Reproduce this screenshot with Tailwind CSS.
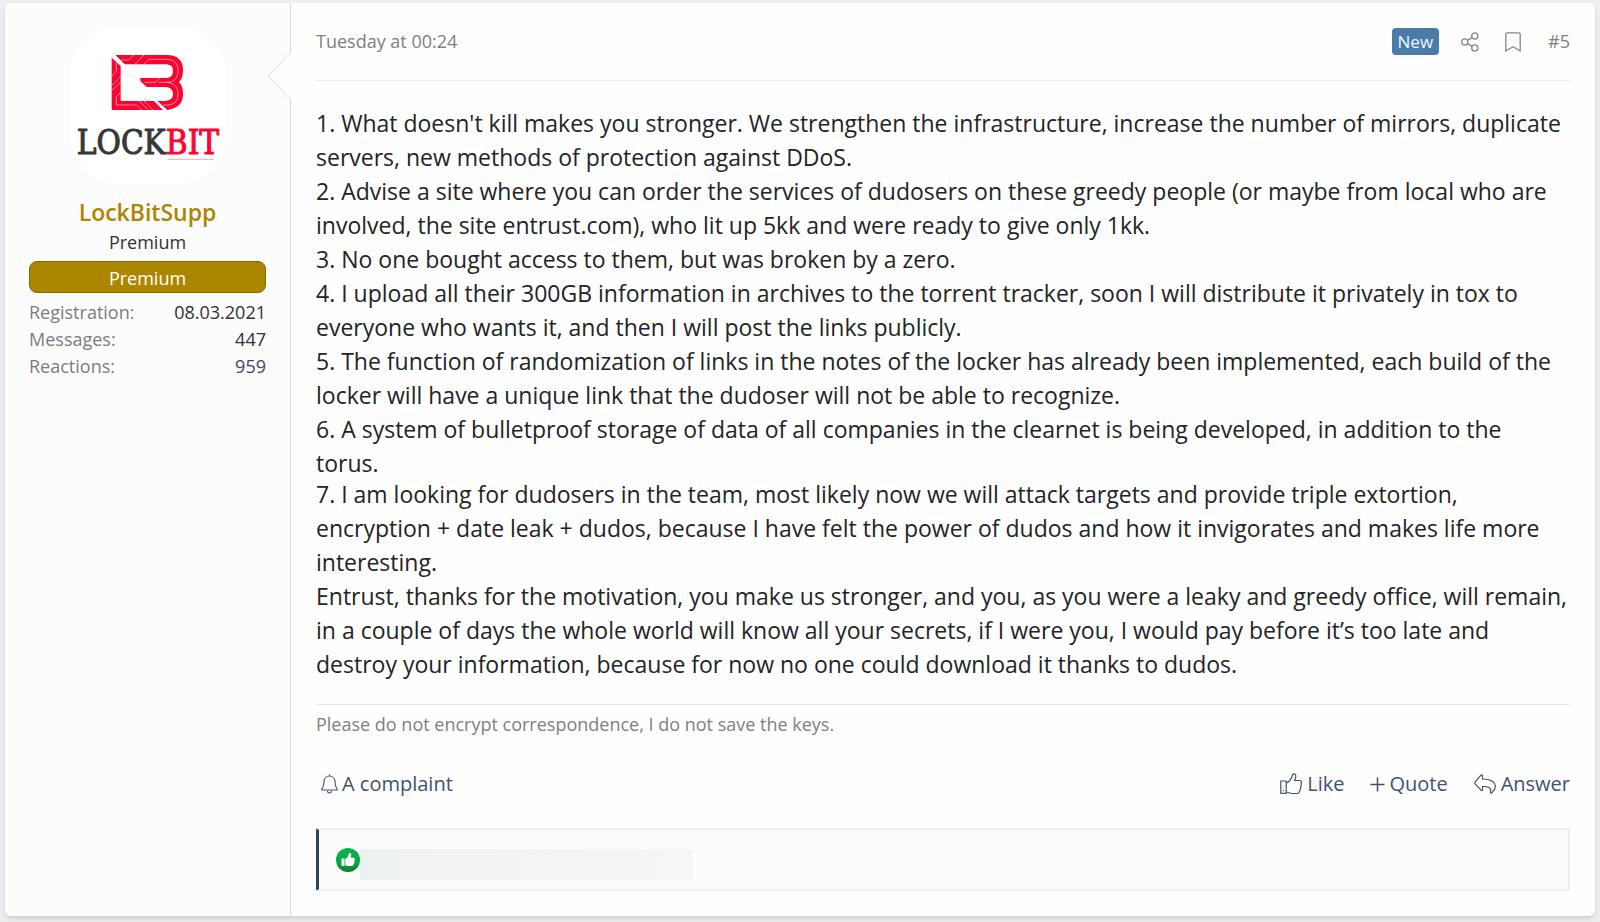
<!DOCTYPE html>
<html lang="en">
<head>
  <meta charset="UTF-8" />
  <meta name="viewport" content="width=device-width, initial-scale=1.0"/>
  <title>LockBitSupp | Post #5</title>
  <script src="https://cdn.jsdelivr.net/npm/@tailwindcss/browser@4"></script>
</head>
<body class="bg-[#edeef1] font-['Open_Sans','Noto_Sans',sans-serif] min-h-screen px-[5px] pt-[3px] pb-[6px] flex flex-col">

  <!-- Post -->
  <article class="flex grow bg-[#fefefe] rounded-md shadow-md">

    <!-- User info -->
    <aside class="relative w-[286px] shrink-0 bg-[#fcfcfc] border-r border-[#dcdde0] rounded-l-md px-6 pt-6 text-[18px] leading-[27px]">
      <div class="mx-auto w-[156px] h-[156px] rounded-[48px] bg-white">
        <svg class="w-full h-full" viewBox="0 0 156 156" role="img" aria-label="LockBit">
          <g transform="translate(-70 -27) scale(.33333)">
            <path fill="#fb0432" d="M335 173 L362 198 V303 H462 L489 330 H335 Z"/>
            <path fill="#fb0432" d="M346 165 H500 C533 165 549 182 549 208 C549 228 545 239 536 247 C545 255 549 264 549 283 C549 309 535 325 502 330 L472 303 H490 C510 303 519 296 519 282 C519 268 510 261 494 261 H440 L421 243 V234 H496 C512 234 519 227 519 213 C519 199 511 193 494 193 H374 Z"/>
            <g fill="none" stroke="#fff" stroke-width="2" stroke-opacity=".8">
              <path d="M349 187 V214 L335 229"/>
              <path d="M362 229 L335 257 M362 245 L335 272"/>
              <path d="M349 290 V315 H410 L425 330 M349 290 L362 278"/>
              <path d="M418 303 L443 328 M432 303 L459 330"/>
              <path d="M363 180 H386 L401 165 M405 193 L432 165"/>
              <path d="M432 193 L446 178 H498 C523 178 534 190 534 211 C534 235 522 247 500 247 H486 L475 247"/>
              <path d="M434 247 H466 L479 234 M500 247 C523 249 534 263 534 282 C534 302 524 312 507 315 H489"/>
            </g>
            <path stroke="#fb0432" stroke-opacity=".35" stroke-width="3" d="M502 478 H640"/>
          </g>
          <g text-anchor="middle" font-family="'DejaVu Serif Condensed','DejaVu Serif',serif" font-size="33">
            <text x="78" y="127" fill="#373737" stroke="#373737" stroke-width="1">LOCK<tspan fill="#fb0432" stroke="#fb0432">BIT</tspan></text>
          </g>
        </svg>
      </div>
      <h4 class="mt-[13px] text-center text-[23px] leading-8 font-semibold"><a href="#" class="text-[#ad8600]">LockBitSupp</a></h4>
      <p class="mt-px text-center text-[#333]">Premium</p>
      <p class="mt-[5px] h-8 leading-[32px] rounded-lg border border-[#866700] bg-[#ad8600] text-center text-white">Premium</p>
      <dl class="mt-[6px] text-[#7b7c7e]">
        <div class="flex justify-between"><dt>Registration:</dt><dd class="text-[#303236]">08.03.2021</dd></div>
        <div class="flex justify-between"><dt>Messages:</dt><dd class="text-[#303236]">447</dd></div>
        <div class="flex justify-between"><dt>Reactions:</dt><dd class="text-[#3c4a5c]">959</dd></div>
      </dl>
      <!-- Arrow that points from the message to the user -->
      <svg class="absolute top-[49px] -right-px w-6 h-12" viewBox="0 0 24 48" fill="#fefefe" aria-hidden="true">
        <path d="M24 0 L1 24 L24 48 Z"/>
        <path fill="none" stroke="#dcdde0" d="M23.5 .5 L1 24 L23.5 47.5"/>
      </svg>
    </aside>

    <!-- Message -->
    <div class="min-w-0 grow px-[25px] pb-[25px]">
      <header class="flex h-[78px] items-center justify-between border-b border-[#ececec] text-[18px] text-[#7f8082]">
        <a href="#"><time>Tuesday at 00:24</time></a>
        <ul class="flex items-center">
          <li class="mr-[22px] h-[27px] rounded-sm bg-[#4a7ca9] px-[6px] text-[17px] leading-[27px] text-[#f3f8fd]">New</li>
          <li class="mr-[26px]">
            <a href="#" aria-label="Share">
              <svg class="w-[18px] h-5" viewBox="0 0 18 20" fill="none" stroke="#858688" stroke-width="1.3">
                <circle cx="3.8" cy="10" r="3.1"/><circle cx="13.8" cy="4" r="3.1"/><circle cx="13.8" cy="16" r="3.1"/>
                <path d="M6.5 8.4 L11.1 5.6 M6.5 11.6 L11.1 14.4"/>
              </svg>
            </a>
          </li>
          <li class="mr-[27px]">
            <a href="#" aria-label="Bookmark">
              <svg class="w-4 h-5" viewBox="0 0 16 20" fill="none" stroke="#858688" stroke-width="1.3" stroke-linejoin="round">
                <path d="M.8 19 V2.2 Q.8 .8 2.2 .8 H13.8 Q15.2 .8 15.2 2.2 V19 L8 14.8 Z"/>
              </svg>
            </a>
          </li>
          <li><a href="#">#5</a></li>
        </ul>
      </header>

      <div class="pt-[25px] text-[23px] leading-[34px] whitespace-nowrap text-[#232426]">
        <p>
          1. What doesn't kill makes you stronger. We strengthen the infrastructure, increase the number of mirrors, duplicate<br>
          servers, new methods of protection against DDoS.<br>
          2. Advise a site where you can order the services of dudosers on these greedy people (or maybe from local who are<br>
          involved, the site entrust.com), who lit up 5kk and were ready to give only 1kk.<br>
          3. No one bought access to them, but was broken by a zero.<br>
          4. I upload all their 300GB information in archives to the torrent tracker, soon I will distribute it privately in tox to<br>
          everyone who wants it, and then I will post the links publicly.<br>
          5. The function of randomization of links in the notes of the locker has already been implemented, each build of the<br>
          locker will have a unique link that the dudoser will not be able to recognize.<br>
          6. A system of bulletproof storage of data of all companies in the clearnet is being developed, in addition to the<br>
          torus.
        </p>
        <p class="-mt-[3px]">
          7. I am looking for dudosers in the team, most likely now we will attack targets and provide triple extortion,<br>
          encryption + date leak + dudos, because I have felt the power of dudos and how it invigorates and makes life more<br>
          interesting.<br>
          Entrust, thanks for the motivation, you make us stronger, and you, as you were a leaky and greedy office, will remain,<br>
          in a couple of days the whole world will know all your secrets, if I were you, I would pay before it’s too late and<br>
          destroy your information, because for now no one could download it thanks to dudos.
        </p>
      </div>

      <p class="mt-[23px] border-t border-[#e6e6e6] pt-[6px] text-[18px] leading-[27px] text-[#7f8082]">Please do not encrypt correspondence, I do not save the keys.</p>

      <!-- Actions -->
      <footer class="mt-8 flex items-center justify-between text-[20px] leading-7 text-[#3d536d]">
        <button type="button" class="flex items-center gap-1 pl-[5px]">
          <svg class="w-[17px] h-5" viewBox="0 0 17 20" fill="none" stroke="currentColor" stroke-width="1.1" stroke-linejoin="round" aria-hidden="true">
            <path d="M8.5 .5 V2 M8.5 2 C5 2 3 4.7 3 8 C3 12 2 13.5 .8 14.8 Q.4 16 1.7 16 H15.3 Q16.6 16 16.2 14.8 C15 13.5 14 12 14 8 C14 4.7 12 2 8.5 2 Z M6.3 17 Q6.8 19 8.5 19 Q10.2 19 10.7 17"/>
          </svg>
          A complaint
        </button>
        <div class="flex items-center gap-[26px]">
          <button type="button" class="flex items-center gap-[5px]">
            <svg class="w-[22px] h-[22px]" viewBox="0 0 22 22" fill="none" stroke="currentColor" stroke-width="1.2" stroke-linejoin="round" aria-hidden="true">
              <path d="M.8 8 H6.2 V20.400 H.8 Z M6.2 10 C9 9 11 6 12 3.500 L12.7 1.5 Q14 .4 15.3 1.5 C16.5 3 15.500 5.500 14.5 7.500 H20 Q21.800 8 21.200 10 Q21.600 11.500 20.800 13 Q21.200 14.500 20.200 16 Q20.500 17.500 19.300 18.500 Q19.300 20.200 17.500 20.500 H12 C9.500 20.500 8.500 19 6.200 19"/>
              <path d="M3 17.700 h1"/>
            </svg>
            Like
          </button>
          <button type="button" class="flex items-center gap-1">
            <svg class="w-[15px] h-[15px]" viewBox="0 0 15 15" stroke="currentColor" stroke-width="1.5" aria-hidden="true"><path d="M7.5 .5 V14.5 M.5 7.5 H14.5"/></svg>
            Quote
          </button>
          <button type="button" class="flex items-center gap-[5px]">
            <svg class="w-[22px] h-5" viewBox="0 0 22 20" fill="none" stroke="currentColor" stroke-width="1.2" stroke-linejoin="round" aria-hidden="true">
              <path d="M8.5 1.2 Q7.8 .6 7 1.2 L1 8.2 Q.5 9 1 9.6 L7 16.2 Q8 17 8.5 16 V12.5 C14 12.3 17.5 13.5 16.5 18.5 Q17 19.7 18 18.8 C20 17 21.3 15 21.3 12.5 C21.3 7 15 5.2 8.5 5 Z"/>
            </svg>
            Answer
          </button>
        </div>
      </footer>

      <!-- Reactions, names hidden -->
      <div class="mt-[30px] flex h-[63px] items-center rounded-xs border-2 border-l-[3px] border-[#efefef] border-l-[#254a5d] bg-[#fcfcfc] pl-[17px]">
        <svg class="w-6 h-6 shrink-0" viewBox="0 0 24 24" role="img" aria-label="Like">
          <defs><linearGradient id="green" x2="0" y2="1"><stop offset="0" stop-color="#08b34f"/><stop offset=".6" stop-color="#04a748"/><stop offset="1" stop-color="#078127"/></linearGradient></defs>
          <circle cx="12" cy="12" r="12" fill="url(#green)"/>
          <path fill="#fff" d="M5.5 10.5 H8.5 V18 H5.5 Z M9.3 11 C11.5 9.5 12.5 8 12.8 5.5 Q14 4.5 15 5.7 C15.5 7 15.2 8.5 14.6 9.7 H17.7 Q19 10 18.6 11.3 Q19 12.3 18.4 13.2 Q18.7 14.3 18 15 Q18.2 16.2 17.3 16.7 Q17.2 18 15.8 18 H12.5 Q10.5 18 9.3 17 Z"/>
        </svg>
        <span class="mt-[10px] h-[31px] w-[333px] bg-linear-to-r from-[#eaf2ee] via-[#f1f2f4] via-15% to-[#f6f6f7]"></span>
      </div>
    </div>
  </article>

</body>
</html>
